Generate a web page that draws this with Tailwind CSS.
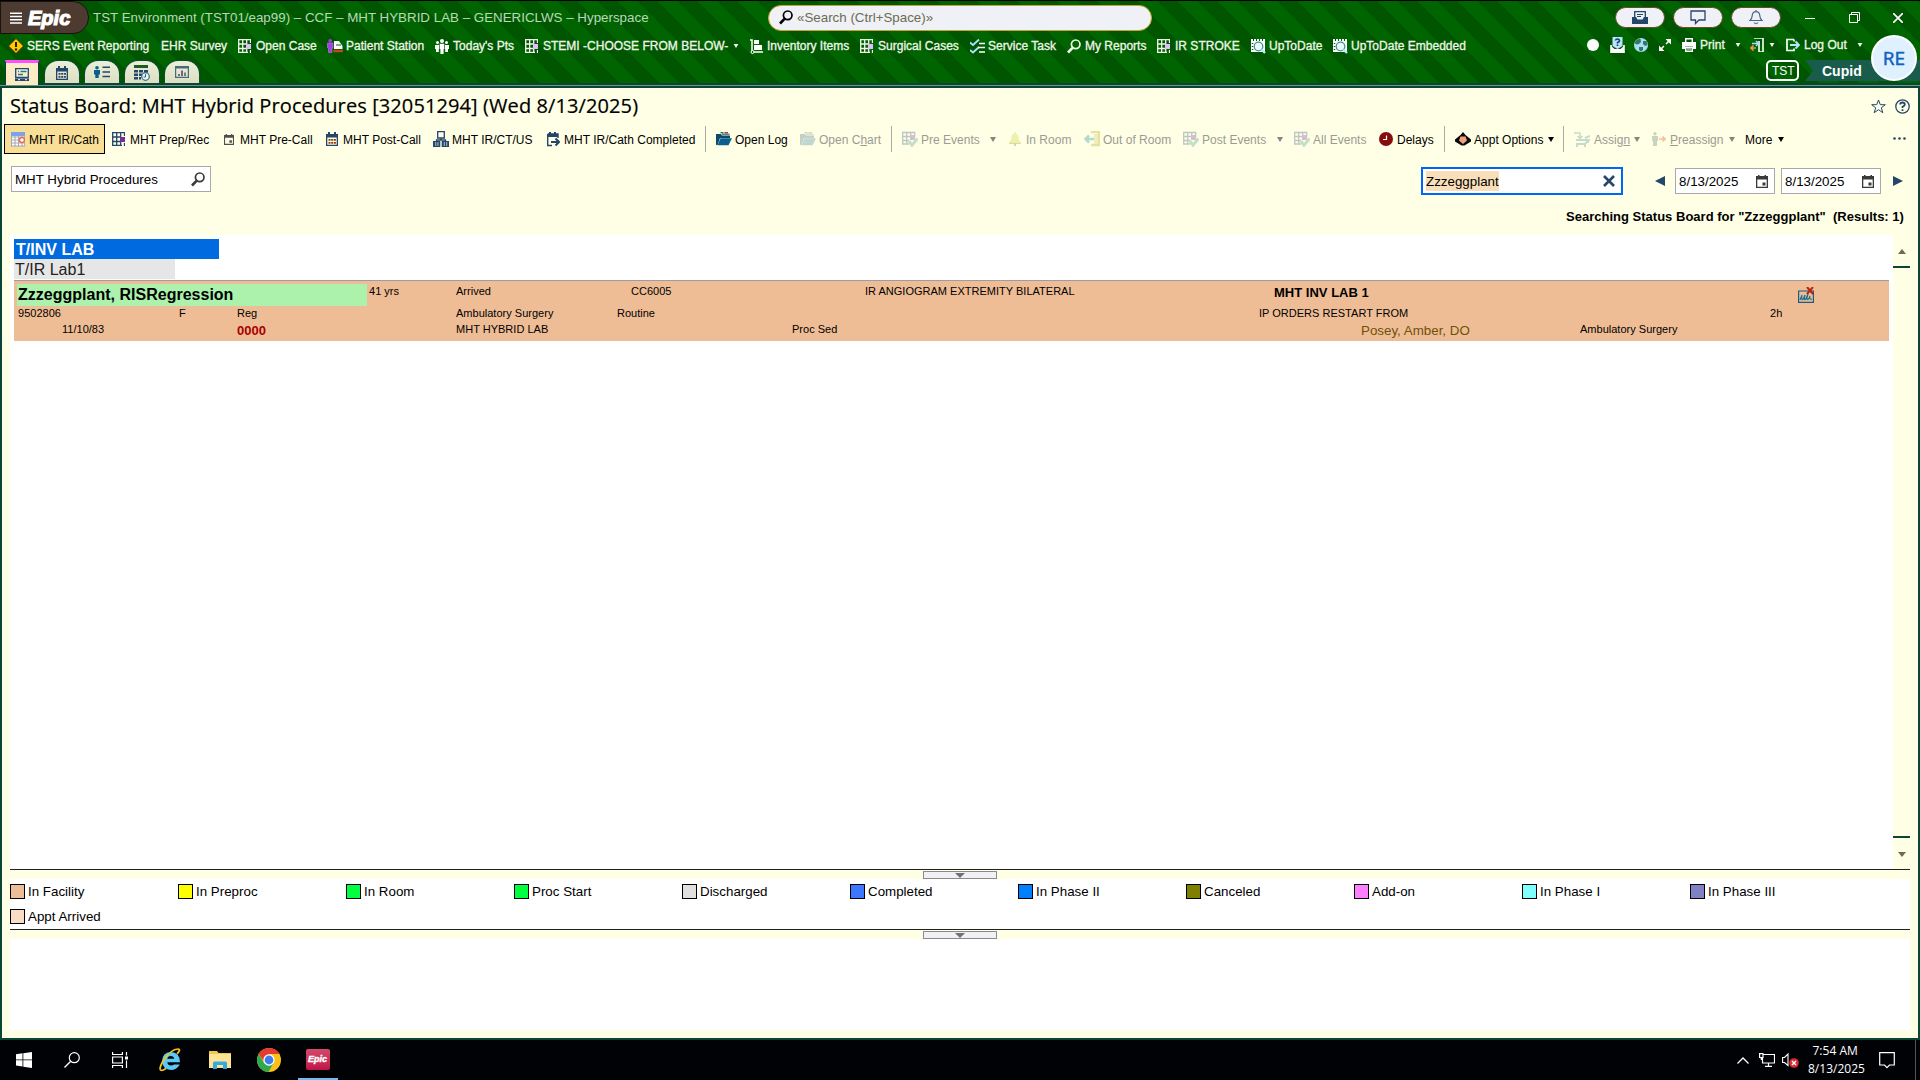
<!DOCTYPE html>
<html lang="en">
<head>
<meta charset="utf-8">
<title>Hyperspace – Status Board</title>
<script src="https://cdn.jsdelivr.net/npm/@tailwindcss/browser@4"></script>
</head>
<body class="w-[1920px] h-[1080px] overflow-hidden bg-black font-['Liberation_Sans',Arial,sans-serif] text-black">
<svg class="hidden">
  <symbol id="grid" viewBox="0 0 13 14"><path d="M.7 0V13.500M4.700 0V13.500M8.700 0V5M8.700 10V13.500M12.500 0V4M12.500 11V14M0 .7H13M0 5H8M0 9.500H8M0 13.300H10" stroke="currentColor" stroke-width="1.300" fill="none"/><rect x="8" y="5" width="5" height="5" fill="var(--a)"/></symbol>
  <symbol id="gridcheck" viewBox="0 0 16 16"><path d="M.7 1V13M4.700 1V13M8.700 1V5M12.700 1V6M0 1.500H13M0 5.500H8M0 9.500H7M0 13H7" stroke="#2a4a78" stroke-width="1.300" fill="none"/><rect x="8" y="4" width="5" height="5" fill="#7030a0"/><path d="M7 10l3 4.200L15.500 7.500" stroke="#3a9a80" stroke-width="3" fill="none"/></symbol>
  <symbol id="mag" viewBox="0 0 14 15"><circle cx="8.700" cy="5.300" r="4.300" fill="none" stroke="currentColor" stroke-width="1.700"/><path d="M5.500 8.800L1 13.500" stroke="currentColor" stroke-width="2.600"/></symbol>
  <symbol id="cal" viewBox="0 0 12 14"><path d="M0 2H12V14H0zM1.300 5.500V12.700H10.700V5.500z" fill="currentColor" fill-rule="evenodd"/><path d="M2 0h2v3H2zM8 0h2v3H8z" fill="currentColor"/><path d="M2.500 7h2v1.700h-2zM5.200 7h2v1.700h-2zM7.900 7h2v1.700h-2zM2.500 10h2v1.700h-2zM5.200 10h2v1.700h-2zM7.900 10h2v1.700h-2z" fill="var(--a)"/></symbol>
  <symbol id="date" viewBox="0 0 12 13"><path d="M0 1H12V13H0zM1.300 4.500V11.700H10.700V4.500z" fill="currentColor" fill-rule="evenodd"/><path d="M2 0h1.500v2H2zM8.500 0H10v2H8.500zM6.500 7.500h3v3h-3z" fill="currentColor"/></symbol>
  <symbol id="folder" viewBox="0 0 16 14"><path d="M0 2H5L6 3.500H14V6H4L1.500 13H0z" fill="#0d4a6e"/><path d="M4.500 6.300H16L12.500 13.300H1.500z" fill="#0a5f8e"/><path d="M4.500.7H7.500" stroke="#2a7a2a" stroke-width="1.400"/><path d="M8.500.7H12" stroke="#c03020" stroke-width="1.400"/><path d="M6 2.200H13.500" stroke="#0d4a6e"/></symbol>
  <symbol id="uptodate" viewBox="0 0 15 15"><path d="M0 0H2V2H3V0H5V2H6V0H8V2H9V0H11V2H12V0H14V13H0z" fill="#fff"/><path d="M1.500 4V5M1.500 7V8M1.500 10V11" stroke="#006000" stroke-width="1.500"/><circle cx="7.500" cy="7.500" r="4.300" fill="#e8fbff" stroke="#4d8f92" stroke-width="1.300"/><path d="M10.500 10.500L14 14" stroke="#b8ecf8" stroke-width="2.400"/></symbol>
  <symbol id="down" viewBox="0 0 6 5"><path d="M0 0H6L3 5z" fill="currentColor"/></symbol>
</svg>

<div class="flex h-[1040px] flex-col">
  <!-- application header -->
  <header class="relative flex h-[83px] flex-col border-t border-black bg-[repeating-linear-gradient(45deg,#005600_0px,#005600_14.14px,#006500_14.14px,#006500_28.28px)]">
    <div class="flex h-[33px] items-center">
      <div class="flex h-[33px] w-[89px] items-center rounded-r-[16px] border border-[#1b120e] bg-[#4d3b31] pl-[9px]">
        <svg class="h-3 w-3 text-white" viewBox="0 0 12 12"><path d="M0 1.200H12M0 4.500H12M0 7.800H12M0 11H12" stroke="currentColor" stroke-width="1.500"/></svg>
        <span data-fit class="ml-[6px] inline-block w-[47px] whitespace-nowrap text-[20px] leading-5 font-black italic text-white [-webkit-text-stroke:1.2px_white]">Epic</span>
      </div>
      <span data-fit class="ml-[4px] inline-block w-[554px] whitespace-nowrap pt-[1px] text-[13.33px] text-[#b9d8b9]">TST Environment (TST01/eap99) – CCF – MHT HYBRID LAB – GENERICLWS – Hyperspace</span>
      <div class="ml-[121px] flex h-[26px] w-[384px] items-center rounded-full border border-[#c9a227] bg-[#eff1f7] pl-[10px]">
        <svg class="h-[15px] w-[14px]"><use href="#mag"/></svg>
        <span data-fit class="ml-[4px] inline-block w-[135px] whitespace-nowrap text-[13.33px] text-[#6c6c50]">«Search (Ctrl+Space)»</span>
      </div>
      <div class="ml-[463px] flex gap-[8px]">
        <div class="flex h-[21px] w-[50px] items-center justify-center rounded-full border border-[#6b4a28] bg-[#eff1f7]"><svg class="h-[13px] w-4" viewBox="0 0 16 13"><path d="M2.700 7V.7H13.300V7" fill="none" stroke="#24466b" stroke-width="1.300"/><path d="M5 3.500H11M5 5.500H9" stroke="#24466b"/><path d="M0 6H4L5.500 8.500H10.500L12 6H16V13H0z" fill="#24466b"/></svg></div>
        <div class="flex h-[21px] w-[50px] items-center justify-center rounded-full border border-[#6b4a28] bg-[#eff1f7]"><svg class="h-[15px] w-4" viewBox="0 0 16 15"><path d="M1 1H15V10H9L5.500 13.500V10H1z" fill="none" stroke="#24466b" stroke-width="1.300"/></svg></div>
        <div class="flex h-[21px] w-[50px] items-center justify-center rounded-full border border-[#6b4a28] bg-[#eff1f7]"><svg class="h-[15px] w-[14px]" viewBox="0 0 14 15"><path d="M1 10.500C3 9 3 7.500 3.300 5C3.600 2.800 5 1.700 7 1.700S10.400 2.800 10.700 5C11 7.500 11 9 13 10.500zM7 0V2M5 12.500Q7 15 9 12.500" fill="none" stroke="#4a6684" stroke-width="1.200"/></svg></div>
      </div>
      <svg class="ml-[24px] h-3 w-[10px]" viewBox="0 0 10 12"><path d="M0 6.500H10" stroke="#fff"/></svg>
      <svg class="ml-[34px] h-[11px] w-[11px]" viewBox="0 0 11 11"><path d="M.5 2.500H8.500V10.500H.5zM2.500 2.500V.5H10.500V8.500H8.500" fill="none" stroke="#fff"/></svg>
      <svg class="ml-[33px] h-[10px] w-[10px]" viewBox="0 0 10 10"><path d="M0 0L10 10M10 0L0 10" stroke="#fff" stroke-width="1.700"/></svg>
    </div>

    <nav class="mt-[1px] flex h-[22px] items-center whitespace-nowrap text-xs text-[#f0f6ea] [-webkit-text-stroke:0.3px]">
      <svg class="ml-[8px] h-4 w-4" viewBox="0 0 16 16"><path d="M8 .5L15.500 8L8 15.500L.5 8z" fill="#ffcc00" stroke="#402800"/><path d="M8 4V9" stroke="#2a1500" stroke-width="2"/><circle cx="8" cy="11.500" r="1.200" fill="#2a1500"/></svg>
      <span data-fit class="ml-[3px] w-[122px]">SERS Event Reporting</span>
      <span data-fit class="ml-[12px] w-[66px]">EHR Survey</span>
      <svg class="ml-[11px] h-[14px] w-[13px] [--a:#e3bdfb]"><use href="#grid"/></svg>
      <span data-fit class="ml-[5px] w-[61px]">Open Case</span>
      <svg class="ml-[10px] h-[14px] w-4" viewBox="0 0 16 14"><circle cx="3.200" cy="1.800" r="1.800" fill="#a040e0"/><path d="M.5 4H6V9H5V13.500H1.500V9H.5z" fill="#a040e0" stroke="#c98af0" stroke-width=".5"/><path d="M7 2H12L15.500 7V10H7z" fill="#fff"/><path d="M9 6h5" stroke="#006000"/><path d="M6.500 12H16" stroke="#c04a10" stroke-width="2.500"/></svg>
      <span data-fit class="ml-[3px] w-[78px]">Patient Station</span>
      <svg class="ml-[11px] h-[15px] w-[14px]" viewBox="0 0 14 15" fill="#fff"><circle cx="7" cy="2" r="2"/><circle cx="2.500" cy="3.500" r="1.500"/><circle cx="11.500" cy="3.500" r="1.500"/><path d="M4.700 4.700H9.300V10H8.600V15H5.400V10H4.700zM0 6H4V10H3.800V13H1V10H0zM10 6H14V10H13V13H10.200V10H10z"/></svg>
      <span data-fit class="ml-[4px] w-[61px]">Today's Pts</span>
      <svg class="ml-[11px] h-[14px] w-[13px] [--a:#e3bdfb]"><use href="#grid"/></svg>
      <span data-fit class="ml-[5px] w-[185px]">STEMI -CHOOSE FROM BELOW-</span>
      <svg class="ml-[5px] h-1 w-[6px]"><use href="#down"/></svg>
      <svg class="ml-[11px] h-[15px] w-[13px]" viewBox="0 0 13 15"><path d="M0 1H2V13H13" stroke="#fff" fill="none" stroke-width="1.500"/><circle cx="2.500" cy="13" r="1.500" fill="#006000" stroke="#fff"/><path d="M4 1H9V5H4zM4 6H12V11H4z" fill="#fff"/></svg>
      <span data-fit class="ml-[4px] w-[82px]">Inventory Items</span>
      <svg class="ml-[11px] h-[14px] w-[13px] [--a:#e3bdfb]"><use href="#grid"/></svg>
      <span data-fit class="ml-[5px] w-[81px]">Surgical Cases</span>
      <svg class="ml-[11px] h-[15px] w-[15px]" viewBox="0 0 15 15"><path d="M0 3.500L3 6L9 .5M0 11L3 13.500L9 8" stroke="#a8e0ff" stroke-width="1.800" fill="none"/><path d="M9 4.500H15M8 8.500H15M9 13H15" stroke="#fff" stroke-width="1.500"/></svg>
      <span data-fit class="ml-[3px] w-[68px]">Service Task</span>
      <svg class="ml-[11px] h-[15px] w-[14px]"><use href="#mag"/></svg>
      <span data-fit class="ml-[4px] w-[61px]">My Reports</span>
      <svg class="ml-[11px] h-[14px] w-[13px] [--a:#e3bdfb]"><use href="#grid"/></svg>
      <span data-fit class="ml-[5px] w-[65px]">IR STROKE</span>
      <svg class="ml-[11px] h-[15px] w-[15px]"><use href="#uptodate"/></svg>
      <span data-fit class="ml-[3px] w-[53px]">UpToDate</span>
      <svg class="ml-[11px] h-[15px] w-[15px]"><use href="#uptodate"/></svg>
      <span data-fit class="ml-[3px] w-[115px]">UpToDate Embedded</span>
      <div class="ml-[121px] flex h-[20px] items-center self-start">
        <span class="size-3 rounded-full bg-white"></span>
        <svg class="ml-[11px] h-4 w-[15px]" viewBox="0 0 15 16"><path d="M1 8V15.300H14V8" fill="none" stroke="#fff" stroke-width="1.600"/><path d="M1 9L4.500 12H10.500L14 9V15H1z" fill="#fff"/><path d="M2.500 0H12.500V9L7.500 12L2.500 9z" fill="#b8e4ff"/><path d="M5.500 3.500Q5.700 2 7.500 2T9.500 3.700Q9.500 5 7.500 5.500V6.500M7.500 7.500V9" stroke="#183c6c" stroke-width="1.600" fill="none"/></svg>
        <svg class="ml-[9px] size-[14px]" viewBox="0 0 14 14"><circle cx="7" cy="7" r="7" fill="#a9dcf5"/><path d="M2 2.500Q5 0 6.500 1L7 4L5 6L2.500 6.500L.5 5zM9 3L12.500 3L13.500 7L11 8L9 6zM5 9L9 9L9 12L7 13.500L5 12z" fill="#2f7a5c"/></svg>
        <svg class="ml-[11px] size-3" viewBox="0 0 12 12"><path d="M1 11L11 1" stroke="#fff" stroke-width="1.500" stroke-dasharray="5.500 3"/><path d="M6.500 0H12V5.500zM0 6.500V12H5.500z" fill="#fff"/></svg>
        <svg class="ml-[11px] size-[14px]" viewBox="0 0 14 14"><path d="M3.700 4V.7H10.300V4M3.700 9.500V13.300H10.300V9.500z" fill="none" stroke="#fff" stroke-width="1.400"/><path d="M0 4H14V11H11V8.500H3V11H0z" fill="#fff"/><path d="M5 11H9" stroke="#fff"/></svg>
        <span data-fit class="ml-[4px] w-[25px]">Print</span>
        <svg class="ml-[10px] h-1 w-[6px]"><use href="#down"/></svg>
        <svg class="ml-[9px] size-[14px]" viewBox="0 0 14 14"><path d="M4 0H13V14H9V3" fill="none" stroke="#fff" stroke-width="1.600"/><path d="M2 5.500H8M6 3L8.500 5.500L6 8" fill="none" stroke="#9fdcff" stroke-width="1.500"/><path d="M6 10H1M3.500 7.500L1 10L3.500 12.500" fill="none" stroke="#f09060" stroke-width="1.700"/></svg>
        <svg class="ml-[5px] h-1 w-[6px]"><use href="#down"/></svg>
        <svg class="ml-[11px] size-[14px]" viewBox="0 0 14 13"><path d="M8 1H1V12H8V10M8 3V1" fill="none" stroke="#fff" stroke-width="1.700"/><path d="M4 6.500H12M9.500 3L13 6.500L9.500 10" fill="none" stroke="#b8e4ff" stroke-width="1.900"/></svg>
        <span data-fit class="ml-[4px] w-[43px]">Log Out</span>
        <svg class="ml-[10px] h-1 w-[6px]"><use href="#down"/></svg>
      </div>
    </nav>

    <div class="mt-[3px] flex h-[23px] items-start">
      <div class="ml-[5px] flex h-[25px] w-[34px] items-center justify-center border-x border-t-[3px] border-x-[#0a4034] border-t-[#ff50ff] bg-[#fbecc6]"><svg class="h-[13px] w-[14px]" viewBox="0 0 14 13"><path d="M.7.7H13.300V9.500H.7z" fill="none" stroke="#1d4a78" stroke-width="1.300"/><path d="M3 3.500H4M5.500 3.500H11.500M3 6.500H8" stroke="#1a7a96" stroke-width="1.300"/><path d="M0 10.500H14V13H0z" fill="#24466b"/><path d="M3 11.700H5M10 11.700H12" stroke="#fff"/></svg></div>
      <div class="ml-[5px] flex h-[23px] w-[36px] items-center justify-center rounded-t-[14px] border border-b-0 border-[#0a5034] bg-linear-to-b from-[#ecefda] to-[#dcdfc0] pt-[2px]"><svg class="h-[14px] w-3 text-[#24466b] [--a:#24466b]"><use href="#cal"/></svg></div>
      <div class="ml-[4px] flex h-[23px] w-[36px] items-center justify-center rounded-t-[14px] border border-b-0 border-[#0a5034] bg-linear-to-b from-[#ecefda] to-[#dcdfc0]"><svg class="h-3 w-4" viewBox="0 0 16 12"><circle cx="3" cy="1.800" r="1.800" fill="#0a5f8e"/><path d="M0 4H6V8.500H4.700V12H1.300V8.500H0z" fill="#0a5f8e"/><path d="M8.500 1.200H16M8.500 6H16M8.500 10.500H16" stroke="#24466b" stroke-width="1.600"/></svg></div>
      <div class="ml-[4px] flex h-[23px] w-[36px] items-center justify-center rounded-t-[14px] border border-b-0 border-[#0a5034] bg-linear-to-b from-[#ecefda] to-[#dcdfc0] pt-[2px]"><svg class="h-4 w-4" viewBox="0 0 16 16"><path d="M0 0H14V3H0z" fill="#1d5a24"/><path d="M0 5h4v2.500H0zM5 5h4v2.500H5zM10 5h4v2.500h-4zM0 8.500h4V11H0zM5 8.500h3V11H5zM0 12h4v2.500H0zM5 12h2v2.500H5z" fill="#24466b"/><circle cx="11.500" cy="11.500" r="3.800" fill="#eef4e8" stroke="#2a6a8e" stroke-width="1.200"/><path d="M11.500 9V12H9.500" stroke="#2a6a8e" fill="none"/></svg></div>
      <div class="ml-[4px] flex h-[23px] w-[36px] items-center justify-center rounded-t-[14px] border border-b-0 border-[#0a5034] bg-linear-to-b from-[#ecefda] to-[#dcdfc0]"><svg class="h-3 w-[14px]" viewBox="0 0 14 12"><path d="M.6.6H13.400V11.400H.6z" fill="none" stroke="#4a6a7c" stroke-width="1.200"/><path d="M0 0H14V2.500H0z" fill="#4a6a7c"/><path d="M4 10V8" stroke="#1d7a8e" stroke-width="1.700"/><path d="M7 10V4.500" stroke="#8030a0" stroke-width="1.700"/><path d="M10 10V6.500" stroke="#2a8a5a" stroke-width="1.700"/></svg></div>
      <div class="ml-[1566px] flex h-[21px] w-[33px] items-center justify-center rounded-[5px] border-2 border-white text-[12px] text-white"><span data-fit class="w-[21px]">TST</span></div>
      <div class="ml-[6px] flex h-[21px] w-[115px] items-center bg-[#195c4b] pl-[17px] text-sm font-bold text-white [clip-path:polygon(0_0,100%_0,100%_100%,0_100%,8px_50%)]"><span data-fit class="w-[39px] whitespace-nowrap">Cupid</span></div>
    </div>
    <!-- user badge hangs over both header rows -->
    <div class="absolute top-[34px] right-[3px] flex size-[46px] items-center justify-center rounded-full border-2 border-white bg-[#dff0ff] font-['Open_Sans',sans-serif] text-[19px] text-[#0e62c0] [-webkit-text-stroke:0.5px]">RE</div>
  </header>
  <div class="flex h-[5px] flex-col bg-[#0b4536] pt-[2px]"><div class="h-px bg-[#6f9685]"></div></div>

  <!-- activity -->
  <main class="flex h-[952px] flex-col border-x-2 border-b-2 border-[#0b4536] bg-[#ffffe6]">
    <div class="flex h-[36px] items-center pl-[8px]">
      <h1 class="w-[628px] shrink-0 whitespace-nowrap font-['Open_Sans','Noto_Sans',sans-serif] text-[20px] tracking-[0.1px] [-webkit-text-stroke:0.2px]">Status Board: MHT Hybrid Procedures [32051294] (Wed 8/13/2025)</h1>
      <svg class="ml-[1233px] size-[15px]" viewBox="0 0 15 15"><path d="M7.500 1L9.300 5.700H14.300L10.300 8.800L11.800 13.700L7.500 10.700L3.200 13.700L4.700 8.800L.7 5.700H5.700z" fill="none" stroke="#24466b"/></svg>
      <svg class="ml-[9px] size-[15px]" viewBox="0 0 15 15"><circle cx="7.500" cy="7.500" r="6.700" fill="none" stroke="#24466b" stroke-width="1.300"/><path d="M5.200 5.500Q5.300 3.500 7.500 3.500T9.800 5.500Q9.800 6.800 7.500 7.800V9M7.500 10.200V12" fill="none" stroke="#24466b" stroke-width="1.800"/></svg>
    </div>

    <div class="flex h-[30px] items-center whitespace-nowrap pl-[2px] text-[12px] [&_span]:pt-[2px]">
      <div class="flex h-[30px] w-[101px] items-center border border-black bg-[#f8df95] pl-[6px]">
        <svg class="h-[15px] w-[14px]" viewBox="0 0 14 15"><path d="M0 0H14V4H0z" fill="#7ba4e8"/><path d="M0 4H14V14H0z" fill="#fff"/><path d="M.5 3.500V14.500M4 3.500V14.500M7.500 3.500V14.500M11 3.500V14.500M13.700 3.500V14M0 5H14M0 8H14M0 11H14M0 14H14" stroke="#a2a7b5"/><circle cx="11" cy="8" r="2.500" fill="#fff" stroke="#f06a4a" stroke-width="1.400"/></svg>
        <span data-fit class="ml-[4px] w-[69px]">MHT IR/Cath</span>
      </div>
      <svg class="ml-[7px] h-[14px] w-[13px] text-[#24466b] [--a:#7030a0]"><use href="#grid"/></svg>
      <span data-fit class="ml-[5px] w-[79px]">MHT Prep/Rec</span>
      <svg class="ml-[15px] h-[11px] w-[10px] text-[#505050]"><use href="#date"/></svg>
      <span data-fit class="ml-[6px] w-[72px]">MHT Pre-Call</span>
      <svg class="ml-[14px] h-[14px] w-3 text-[#24466b] [--a:#8a3a10]"><use href="#cal"/></svg>
      <span data-fit class="ml-[5px] w-[78px]">MHT Post-Call</span>
      <svg class="ml-[12px] h-4 w-4" viewBox="0 0 16 16"><path d="M4.700.7H11.300V7H4.700zM8 7V9M3.500 11V9H12.500V11" fill="none" stroke="#24466b" stroke-width="1.300"/><path d="M0 10H7.300V16H0zM8.700 10H16V16H8.700z" fill="#24466b"/><path d="M2 12h1.300M4.300 12h1.300M2 14h1.300M4.300 14h1.300M10.700 12H12M13 12h1.300M10.700 14H12M13 14h1.300" stroke="#fff"/></svg>
      <span data-fit class="ml-[3px] w-[80px]">MHT IR/CT/US</span>
      <svg class="ml-[15px] h-[15px] w-[13px]" viewBox="0 0 13 15"><path d="M.7 2H11V6M.7 2V13.500H5" fill="none" stroke="#24466b" stroke-width="1.400"/><path d="M0 2H11V5H0zM2 0h2v3H2zM7 0h2v3H7z" fill="#24466b"/><path d="M4 10H11M8.500 6.500L12 10L8.500 13.500" fill="none" stroke="#24466b" stroke-width="2"/></svg>
      <span data-fit class="ml-[4px] w-[131px]">MHT IR/Cath Completed</span>
      <div class="ml-[10px] h-[26px] w-px bg-[#a8a8a8]"></div>
      <svg class="ml-[10px] h-[14px] w-4"><use href="#folder"/></svg>
      <span data-fit class="ml-[3px] w-[53px]">Open Log</span>
      <svg class="ml-[12px] h-[14px] w-4 opacity-25"><use href="#folder"/></svg>
      <span data-fit class="ml-[3px] w-[62px] text-[#9b9b91]">Open C<u>h</u>art</span>
      <div class="ml-[10px] h-[26px] w-px bg-[#a8a8a8]"></div>
      <svg class="ml-[10px] h-4 w-4 opacity-30"><use href="#gridcheck"/></svg>
      <span data-fit class="ml-[3px] w-[58px] text-[#9b9b91]">Pre Events</span>
      <svg class="ml-[11px] h-[5px] w-[6px] text-[#85857c]"><use href="#down"/></svg>
      <svg class="ml-[13px] h-[14px] w-3" viewBox="0 0 12 14"><path d="M6 0C7 0 7 1 7 1.500C9.500 2.500 9.700 5 9.700 7.500L12 10.500V12H0V10.500L2.300 7.500C2.300 5 2.500 2.500 5 1.500C5 1 5 0 6 0z" fill="#eef0b0"/><path d="M0 11.500H12" stroke="#dedc90"/><circle cx="6" cy="13" r="1" fill="#c8c890"/></svg>
      <span data-fit class="ml-[5px] w-[46px] text-[#9b9b91]">In Room</span>
      <svg class="ml-[12px] h-4 w-4" viewBox="0 0 16 16"><path d="M7 1H15V14H7" fill="none" stroke="#e3e2a4" stroke-width="2.500"/><path d="M10 3H14V13H10z" fill="#eeedbb"/><path d="M2 8H10M5 4.500L1.500 8L5 11.500" fill="none" stroke="#b5dacb" stroke-width="2.500"/></svg>
      <span data-fit class="ml-[3px] w-[68px] text-[#9b9b91]">Out of Room</span>
      <svg class="ml-[12px] h-4 w-4 opacity-30"><use href="#gridcheck"/></svg>
      <span data-fit class="ml-[3px] w-[64px] text-[#9b9b91]">Post Events</span>
      <svg class="ml-[11px] h-[5px] w-[6px] text-[#85857c]"><use href="#down"/></svg>
      <svg class="ml-[11px] h-4 w-4 opacity-30"><use href="#gridcheck"/></svg>
      <span data-fit class="ml-[3px] w-[53px] text-[#9b9b91]">All Events</span>
      <svg class="ml-[13px] size-[14px]" viewBox="0 0 14 14"><circle cx="7" cy="7" r="7" fill="#860d0d"/><path d="M7.500 3.500V7.500H4" stroke="#fff" stroke-width="1.200" fill="none"/></svg>
      <span data-fit class="ml-[4px] w-[37px]">Delays</span>
      <div class="ml-[10px] h-[26px] w-px bg-[#a8a8a8]"></div>
      <svg class="ml-[10px] h-[14px] w-4" viewBox="0 0 16 14"><path d="M8 0L10.500 3L16 7.500V9.500L9.500 13.500H6.500L0 9.500V7.500L5.500 3z" fill="#0a0a0a"/><path d="M5.500 4.500H10.500L12 8.500L8 12L4 8.500z" fill="#f2a080"/></svg>
      <span data-fit class="ml-[3px] w-[69px]">Appt Options</span>
      <svg class="ml-[5px] h-[5px] w-[6px]"><use href="#down"/></svg>
      <div class="ml-[9px] h-[26px] w-px bg-[#a8a8a8]"></div>
      <svg class="ml-[10px] h-[15px] w-4" viewBox="0 0 16 15" fill="none" stroke="#c5dccb"><path d="M0 1H6V6M3.500 4L6 6.500L8.500 4" stroke-width="1.500"/><path d="M2 8H15L11 12H3V15M11 12V15M16 4L11 6M14 8V11" stroke-width="2"/></svg>
      <span data-fit class="ml-[4px] w-[36px] text-[#9b9b91]">Assig<u>n</u></span>
      <svg class="ml-[4px] h-[5px] w-[6px] text-[#85857c]"><use href="#down"/></svg>
      <svg class="ml-[12px] h-[14px] w-[14px]" viewBox="0 0 14 14"><circle cx="3" cy="1.700" r="1.700" fill="#c9d3bd"/><path d="M0 4H6V9H5V14H1V9H0z" fill="#c9d3bd"/><path d="M7 7H13M10.500 4.500L13 7L10.500 9.500" stroke="#f2c0a0" stroke-width="1.700" fill="none"/></svg>
      <span data-fit class="ml-[4px] w-[53px] text-[#9b9b91]"><u>P</u>reassign</span>
      <svg class="ml-[6px] h-[5px] w-[6px] text-[#85857c]"><use href="#down"/></svg>
      <span data-fit class="ml-[10px] w-[28px]">More</span>
      <svg class="ml-[5px] h-[5px] w-[6px]"><use href="#down"/></svg>
      <svg class="ml-[109px] h-3 w-[13px]" viewBox="0 0 13 12" fill="#24466b"><circle cx="1.500" cy="5.500" r="1.300"/><circle cx="6.500" cy="5.500" r="1.300"/><circle cx="11.500" cy="5.500" r="1.300"/></svg>
    </div>

    <div class="mt-[12px] flex h-[29px] items-start whitespace-nowrap pl-[9px] text-[13.33px]">
      <div class="flex h-[26px] w-[200px] items-center border border-[#a9a9ad] bg-white pl-[3px]">
        <span data-fit class="w-[143px] pt-[1px]">MHT Hybrid Procedures</span>
        <svg class="ml-[33px] h-[15px] w-[14px] text-[#3a3a3a]"><use href="#mag"/></svg>
      </div>
      <div class="mt-[1px] ml-[1210px] flex h-[28px] w-[202px] items-center border-2 border-[#0066f5] bg-white pl-[3px]">
        <span data-fit class="w-[73px] bg-[#f8dfb8] pt-[1px]">Zzzeggplant</span>
        <svg class="ml-[104px] h-3 w-3" viewBox="0 0 12 12"><path d="M1 1L11 11M11 1L1 11" stroke="#24466b" stroke-width="2.600"/></svg>
      </div>
      <div class="mt-[2px] ml-[32px] flex h-[26px] items-center">
        <svg class="h-[10px] w-[10px]" viewBox="0 0 10 10"><path d="M10 0V10L0 5z" fill="#24466b"/></svg>
        <div class="ml-[10px] flex h-[26px] w-[100px] items-center border border-[#a9a9ad] bg-white pl-[3px]"><span data-fit class="w-[60px] pt-[1px]">8/13/2025</span><svg class="ml-[17px] h-[13px] w-3 text-[#3a3a3a]"><use href="#date"/></svg></div>
        <div class="ml-[6px] flex h-[26px] w-[100px] items-center border border-[#a9a9ad] bg-white pl-[3px]"><span data-fit class="w-[60px] pt-[1px]">8/13/2025</span><svg class="ml-[17px] h-[13px] w-3 text-[#3a3a3a]"><use href="#date"/></svg></div>
        <svg class="ml-[12px] h-[10px] w-[10px]" viewBox="0 0 10 10"><path d="M0 0V10L10 5z" fill="#24466b"/></svg>
      </div>
    </div>

    <div class="flex h-[40px] items-center justify-end pt-[4px] pr-[8px] text-[13px] font-bold"><span data-fit class="w-[344px] whitespace-pre">Searching Status Board for "Zzzeggplant"  (Results: 1)</span></div>

    <!-- board -->
    <section class="mx-[8px] flex h-[635px] border-b border-[#222]">
      <div class="w-[1883px] bg-white pt-[4px] pl-[4px] whitespace-nowrap">
        <div class="flex h-[20px] w-[205px] items-center bg-[#006ae0] pt-[2px] pl-[2px] text-base font-bold text-white"><span data-fit class="w-[76px]">T/INV LAB</span></div>
        <div class="flex h-[20px] w-[161px] items-center bg-[#e6e6e6] pt-[2px] pl-[1px] text-base text-[#222]"><span data-fit class="w-[69px]">T/IR Lab1</span></div>
        <div class="mt-px h-[61px] w-[1875px] border-t border-[#9c9ca4] bg-[#efbd95] text-[11px]">
          <div class="flex h-[25px] items-start pt-[3px] leading-[14px]">
            <div class="ml-[3px] flex h-[22px] w-[350px] items-center bg-[#acf2ac] pl-[1px] text-base font-bold"><span data-fit class="w-[215px]">Zzzeggplant, RISRegression</span></div>
            <span data-fit class="ml-[2px] w-[29px]">41 yrs</span>
            <span data-fit class="ml-[58px] w-[34px]">Arrived</span>
            <span data-fit class="ml-[141px] w-[40px]">CC6005</span>
            <span data-fit class="ml-[194px] w-[207px]">IR ANGIOGRAM EXTREMITY BILATERAL</span>
            <span data-fit class="mt-[2px] ml-[202px] w-[98px] text-[13px] font-bold">MHT INV LAB 1</span>
            <svg class="mt-[3px] ml-[426px] h-4 w-4" viewBox="0 0 16 16"><path d="M.6 4H15.400V15.400H.6z" fill="none" stroke="#1d5a86" stroke-width="1.200"/><path d="M2 13Q4 8 4 8Q3 13 5 12.500L7 8Q5.500 13 7.500 12.500L10 7Q8 13 10 12.500Q12 10 12 9Q10.500 13 14 12" fill="none" stroke="#1a7296" stroke-width="1.200"/><path d="M9 0L15 7M15 0L9 7" stroke="#b52510" stroke-width="2"/></svg>
          </div>
          <div class="flex h-[15px] items-center">
            <span data-fit class="ml-[4px] w-[43px]">9502806</span>
            <span class="ml-[118px] w-[7px]">F</span>
            <span data-fit class="ml-[51px] w-[20px]">Reg</span>
            <span data-fit class="ml-[199px] w-[97px]">Ambulatory Surgery</span>
            <span data-fit class="ml-[64px] w-[37px]">Routine</span>
            <span data-fit class="ml-[605px] w-[148px]">IP ORDERS RESTART FROM</span>
            <span data-fit class="ml-[363px] w-[12px]">2h</span>
          </div>
          <div class="flex h-[17px] items-center">
            <span data-fit class="ml-[48px] w-[42px]">11/10/83</span>
            <span data-fit class="mt-[2px] ml-[133px] w-[30px] text-[13px] font-bold text-[#a80000]">0000</span>
            <span data-fit class="ml-[189px] w-[91px]">MHT HYBRID LAB</span>
            <span data-fit class="ml-[245px] w-[45px]">Proc Sed</span>
            <span data-fit class="mt-[2px] ml-[524px] w-[109px] text-[13.33px] text-[#6e5208]">Posey, Amber, DO</span>
            <span data-fit class="ml-[110px] w-[97px]">Ambulatory Surgery</span>
          </div>
        </div>
      </div>
      <div class="flex w-[17px] flex-col items-center">
        <svg class="mt-[14px] h-[5px] w-2" viewBox="0 0 8 5"><path d="M0 5H8L4 0z" fill="#6c6c50"/></svg>
        <div class="mt-[12px] h-[2px] w-full bg-[#0b4536]"></div>
        <div class="mt-[568px] h-[2px] w-full bg-[#0b4536]"></div>
        <svg class="mt-[14px] h-[5px] w-2" viewBox="0 0 8 5"><path d="M0 0H8L4 5z" fill="#6c6c50"/></svg>
      </div>
    </section>

    <div class="flex h-[9px] items-end justify-center"><div class="flex h-[8px] w-[74px] items-center justify-center border border-[#8a8a88] bg-[#eff1f7]"><svg class="h-[5px] w-[10px]" viewBox="0 0 10 5"><path d="M0 0H10L5 5z" fill="#6e746e"/></svg></div></div>

    <section class="mx-[8px] grid h-[51px] grid-cols-[repeat(11,168px)] grid-rows-[25px_25px] border-b border-[#222] bg-white text-[13.33px] whitespace-nowrap [&_span]:pt-[1px]">
      <div class="flex items-center pb-[1px]"><i class="mr-[3px] size-[15px] border border-black bg-[#efbd95]"></i><span data-fit class="w-[57px]">In Facility</span></div>
      <div class="flex items-center pb-[1px]"><i class="mr-[3px] size-[15px] border border-black bg-[#ffff00]"></i><span data-fit class="w-[62px]">In Preproc</span></div>
      <div class="flex items-center pb-[1px]"><i class="mr-[3px] size-[15px] border border-black bg-[#00ff40]"></i><span data-fit class="w-[51px]">In Room</span></div>
      <div class="flex items-center pb-[1px]"><i class="mr-[3px] size-[15px] border border-black bg-[#00ff40]"></i><span data-fit class="w-[60px]">Proc Start</span></div>
      <div class="flex items-center pb-[1px]"><i class="mr-[3px] size-[15px] border border-black bg-[#e0e0e0]"></i><span data-fit class="w-[68px]">Discharged</span></div>
      <div class="flex items-center pb-[1px]"><i class="mr-[3px] size-[15px] border border-black bg-[#3c78ff]"></i><span data-fit class="w-[65px]">Completed</span></div>
      <div class="flex items-center pb-[1px]"><i class="mr-[3px] size-[15px] border border-black bg-[#0080ff]"></i><span data-fit class="w-[64px]">In Phase II</span></div>
      <div class="flex items-center pb-[1px]"><i class="mr-[3px] size-[15px] border border-black bg-[#808000]"></i><span data-fit class="w-[57px]">Canceled</span></div>
      <div class="flex items-center pb-[1px]"><i class="mr-[3px] size-[15px] border border-black bg-[#ff80ff]"></i><span data-fit class="w-[43px]">Add-on</span></div>
      <div class="flex items-center pb-[1px]"><i class="mr-[3px] size-[15px] border border-black bg-[#80ffff]"></i><span data-fit class="w-[61px]">In Phase I</span></div>
      <div class="flex items-center pb-[1px]"><i class="mr-[3px] size-[15px] border border-black bg-[#8080c4]"></i><span data-fit class="w-[68px]">In Phase III</span></div>
      <div class="flex items-center pb-[1px]"><i class="mr-[3px] size-[15px] border border-black bg-[#f8dcc4]"></i><span data-fit class="w-[73px]">Appt Arrived</span></div>
    </section>

    <div class="flex h-[9px] items-end justify-center"><div class="flex h-[8px] w-[74px] items-center justify-center border border-[#8a8a88] bg-[#eff1f7]"><svg class="h-[5px] w-[10px]" viewBox="0 0 10 5"><path d="M0 0H10L5 5z" fill="#6e746e"/></svg></div></div>
    <section class="mx-[8px] h-[91px] bg-white"></section>
  </main>
</div>

<!-- taskbar -->
<footer class="flex h-[40px] items-center bg-[#010206] text-white">
  <svg class="ml-[16px] size-4" viewBox="0 0 16 16" fill="#fff"><path d="M0 2.300L6.500 1.300V7.500H0zM7.300 1.200L16 0V7.500H7.300zM0 8.300H6.500V14.600L0 13.600zM7.300 8.300H16V16L7.300 14.700z"/></svg>
  <svg class="ml-[32px] size-4" viewBox="0 0 16 16"><circle cx="10.300" cy="5.700" r="5" fill="none" stroke="#fff" stroke-width="1.200"/><path d="M6.700 9.300L.5 15.500" stroke="#fff" stroke-width="1.300"/></svg>
  <svg class="ml-[32px] size-4" viewBox="0 0 16 16" fill="none" stroke="#fff" stroke-width="1.200"><path d="M.6 0V2.500H10.400V0M.6 16V13.500H10.400V16M.6 5H10.400V11H.6zM14.500 0V3.500M14.500 8.500V16"/><path d="M13 6H16" stroke-width="3"/></svg>
  <svg class="ml-[30px] h-6 w-[24px]" viewBox="0 0 24 24"><path d="M21.500 17Q18.500 22 13 22Q4.500 21.500 4 13Q4.500 4.500 12.500 4Q22 4.500 22 14.300H9.300Q9.800 17.500 13 17.500Q15 17.500 16 16.500H21.500zM9.300 10.800H16.200Q15.700 8 12.800 8T9.300 10.800z" fill="#5cc8f5" fill-rule="evenodd"/><path d="M19 6Q23.500 1 20 1Q13 1 5 13Q0 22 3.500 22.500Q5 22.500 8 20.500" fill="none" stroke="#f7c520" stroke-width="1.700"/></svg>
  <svg class="ml-[27px] h-5 w-[22px]" viewBox="0 0 22 20"><path d="M0 1H8L9.500 3H22V18H0z" fill="#f3c64f"/><path d="M0 4H22V18H0z" fill="#ffe394"/><path d="M4 19V13Q4 11.500 5.500 11.500H16.500Q18 11.500 18 13V19H14V15H8V19z" fill="#35a9e4"/></svg>
  <svg class="ml-[26px] size-6" viewBox="0 0 24 24"><circle cx="12" cy="12" r="12" fill="#fbc116"/><path d="M1.600 6A12 12 0 0 1 22.400 6H12L7.500 14.500z" fill="#e33b2e"/><path d="M1.600 6L7 15L12 17.500L16.500 15L11.500 24A12 12 0 0 1 1.600 6z" fill="#2da94f"/><circle cx="12" cy="12" r="5.700" fill="#fff"/><circle cx="12" cy="12" r="4.400" fill="#3b7ded"/></svg>
  <div class="ml-[17px] flex h-[40px] w-[40px] flex-col items-center border-b-2 border-[#76b9ed] pt-[9px]"><div class="flex h-[21px] w-[24px] items-center justify-center rounded-[2px] bg-linear-to-b from-[#d2486c] to-[#c00f48]"><span data-fit class="w-[20px] text-[9px] font-black italic [-webkit-text-stroke:0.4px]">Epic</span></div></div>
  <svg class="ml-[1399px] h-[7px] w-3" viewBox="0 0 12 7"><path d="M.5 6.500L6 1L11.500 6.500" fill="none" stroke="#fff" stroke-width="1.300"/></svg>
  <svg class="ml-[10px] h-[14px] w-4" viewBox="0 0 16 14" fill="none" stroke="#fff" stroke-width="1.200"><path d="M4 1.500H15.500V10H3.500V5M9.500 10V13M6 13.300H13M.6.6H4V4.500H.6zM2.300 4.500V7"/></svg>
  <svg class="ml-[7px] h-[15px] w-[17px]" viewBox="0 0 17 15"><path d="M.6 4.500H2.500L6 1V12.500L2.500 9.500H.6z" fill="none" stroke="#fff" stroke-width="1.100"/><circle cx="12" cy="10" r="4.800" fill="#da2a35"/><path d="M10 8L14 12M14 8L10 12" stroke="#fff" stroke-width="1.400"/></svg>
  <div class="ml-[9px] flex w-[52px] flex-col items-center font-['Open_Sans','Noto_Sans',sans-serif] text-[12px] leading-[18px] whitespace-nowrap"><span data-fit class="w-[43px]">7:54 AM</span><span data-fit class="w-[52px]">8/13/2025</span></div>
  <svg class="ml-[19px] h-[17px] w-4" viewBox="0 0 16 17"><path d="M.7.7H15.300V13H10.500L8 15.700L5.500 13H.7z" fill="none" stroke="#fff" stroke-width="1.200"/></svg>
  <div class="ml-[20px] h-[40px] w-px bg-[#555]"></div>
</footer>

<script>
  // Spread each label across the width its box reserves.
  document.querySelectorAll('[data-fit]').forEach(function (el) {
    el.style.flexShrink = 0;
    el.style.whiteSpace = 'pre';
    var range = document.createRange();
    range.selectNodeContents(el);
    var target = parseFloat(getComputedStyle(el).width);
    var spacing = 0.01;
    for (var pass = 0; pass < 4; pass++) {
      el.style.letterSpacing = spacing + 'px';
      spacing += (target - range.getBoundingClientRect().width) / el.textContent.length;
    }
    el.style.letterSpacing = spacing + 'px';
  });
</script>
</body>
</html>
